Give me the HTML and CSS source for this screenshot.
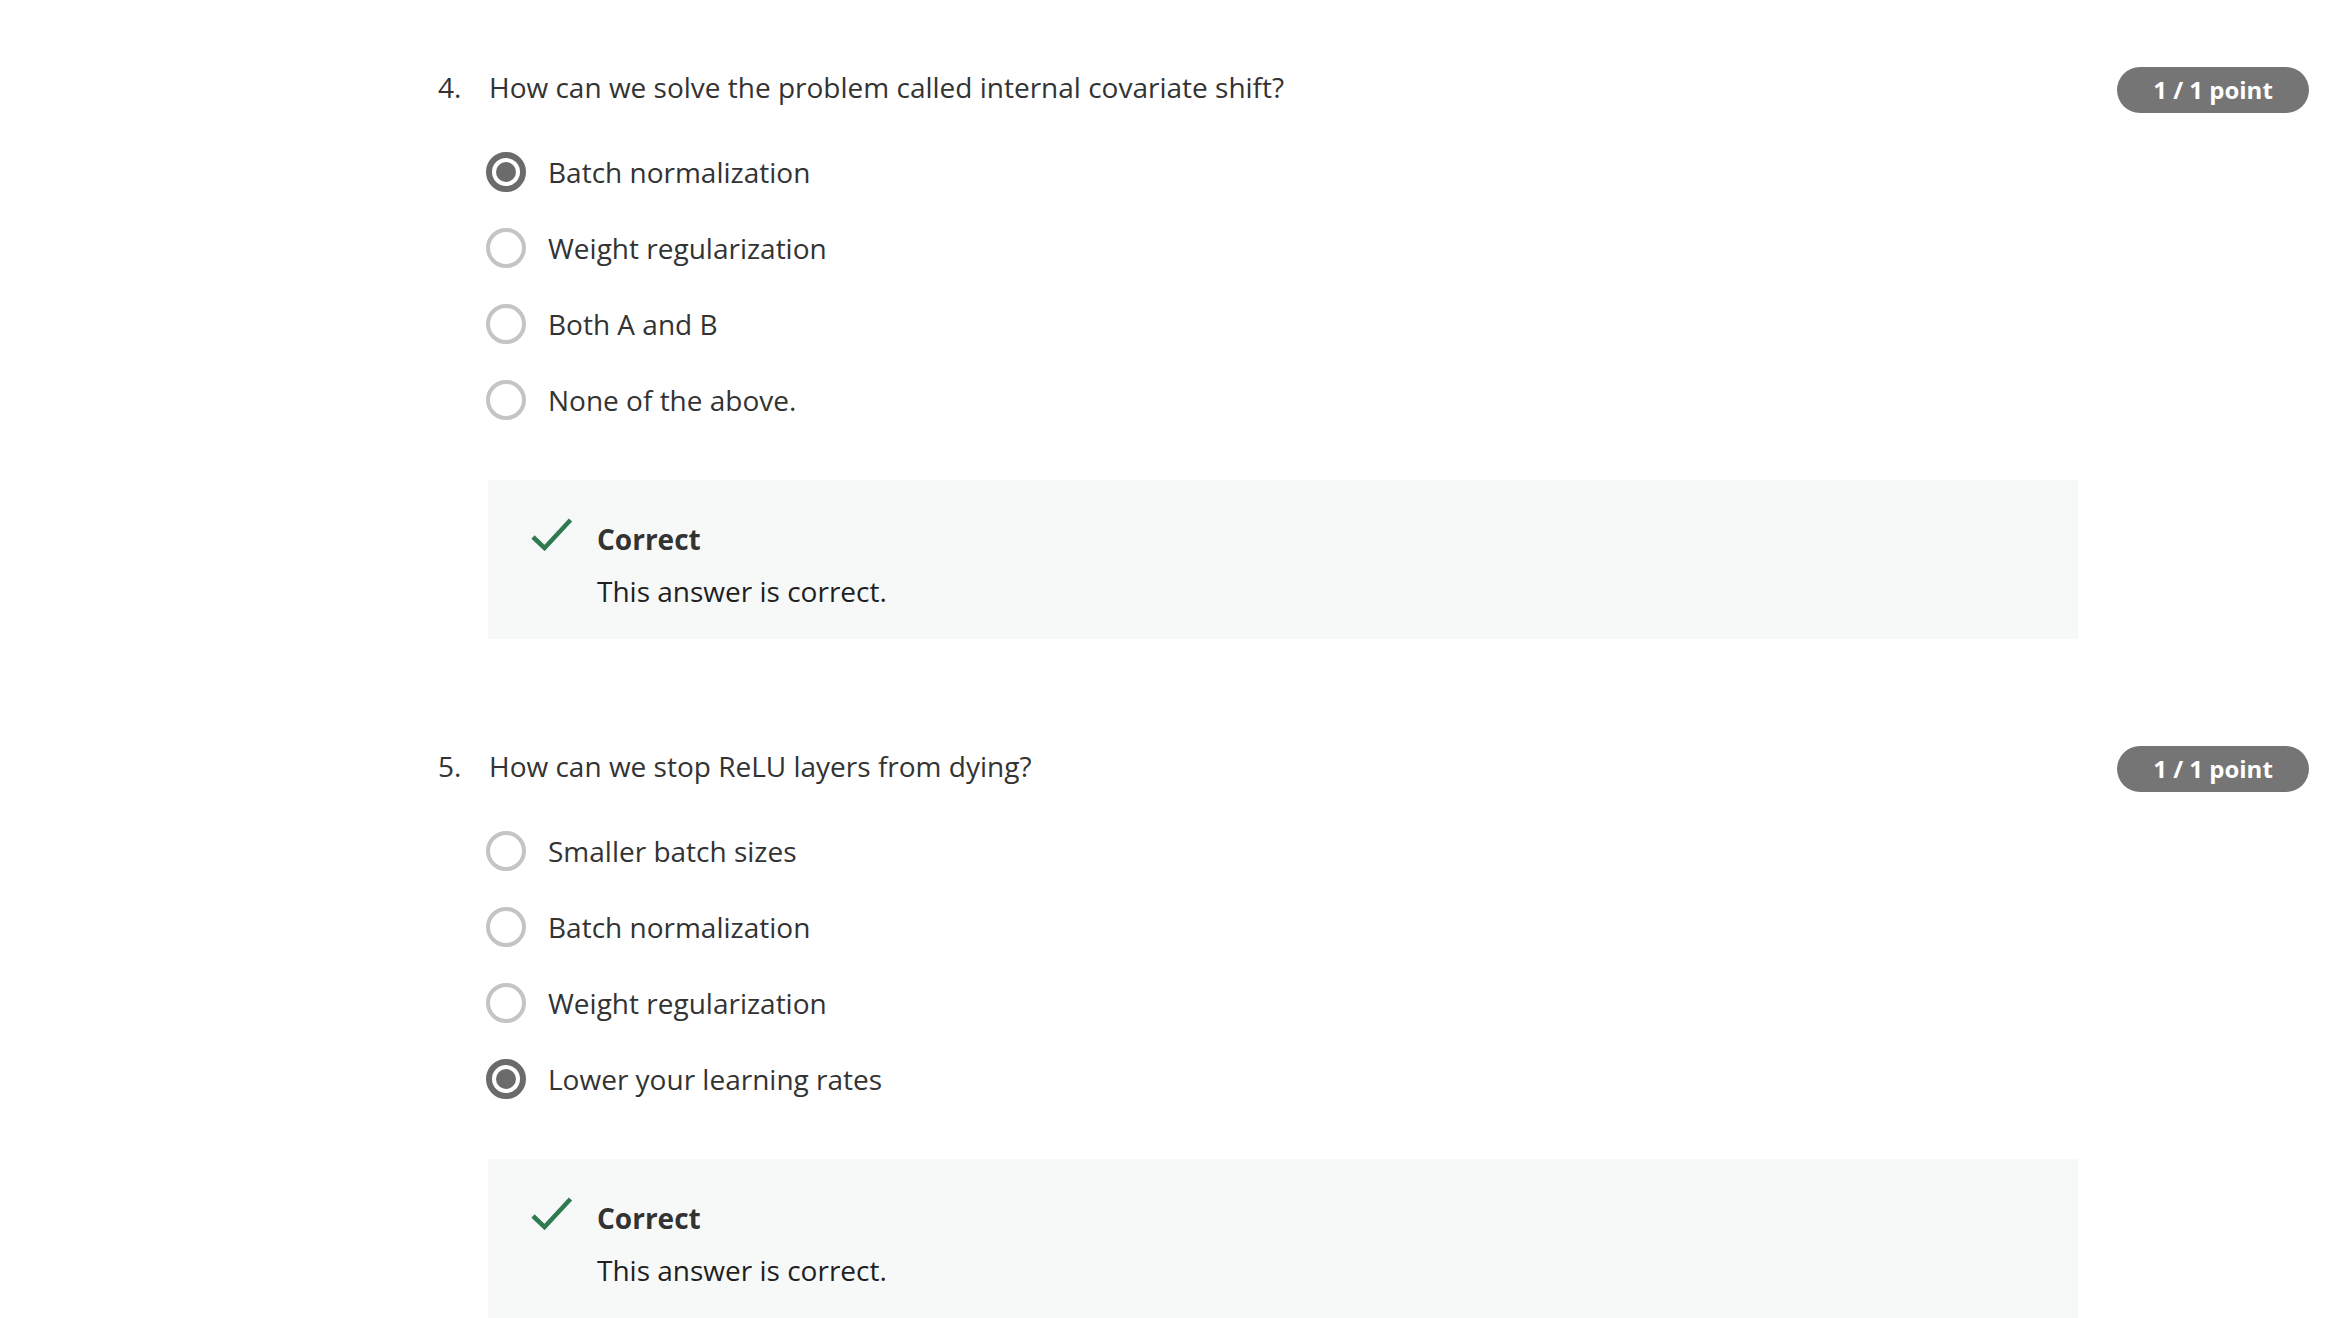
FILE: index.html
```html
<!DOCTYPE html>
<html lang="en">
<head>
<meta charset="utf-8">
<title>Quiz results</title>
<link rel="stylesheet" href="styles.css">
</head>
<body>
<main class="quiz">
  <section class="question q-first">
    <div class="qnum">4.</div>
    <div class="qbody">
      <div class="qtext">How can we solve the problem called internal covariate shift?</div>
      <ul class="options">
        <li class="option"><span class="radio checked"></span><span class="opt-label">Batch normalization</span></li>
        <li class="option"><span class="radio"></span><span class="opt-label">Weight regularization</span></li>
        <li class="option"><span class="radio"></span><span class="opt-label">Both A and B</span></li>
        <li class="option"><span class="radio"></span><span class="opt-label">None of the above.</span></li>
      </ul>
      <div class="feedback">
        <svg class="check" viewBox="0 0 42 34" width="42" height="34" aria-hidden="true"><path d="M2 20 L13.5 31 L39.5 3" fill="none" stroke="#2f7a4e" stroke-width="4.5"/></svg>
        <div class="fb-text">
          <div class="fb-title">Correct</div>
          <div class="fb-desc">This answer is correct.</div>
        </div>
      </div>
    </div>
    <div class="badge">1 / 1 point</div>
  </section>

  <section class="question q-second">
    <div class="qnum">5.</div>
    <div class="qbody">
      <div class="qtext">How can we stop ReLU layers from dying?</div>
      <ul class="options">
        <li class="option"><span class="radio"></span><span class="opt-label">Smaller batch sizes</span></li>
        <li class="option"><span class="radio"></span><span class="opt-label">Batch normalization</span></li>
        <li class="option"><span class="radio"></span><span class="opt-label">Weight regularization</span></li>
        <li class="option"><span class="radio checked"></span><span class="opt-label">Lower your learning rates</span></li>
      </ul>
      <div class="feedback">
        <svg class="check" viewBox="0 0 42 34" width="42" height="34" aria-hidden="true"><path d="M2 20 L13.5 31 L39.5 3" fill="none" stroke="#2f7a4e" stroke-width="4.5"/></svg>
        <div class="fb-text">
          <div class="fb-title">Correct</div>
          <div class="fb-desc">This answer is correct.</div>
        </div>
      </div>
    </div>
    <div class="badge">1 / 1 point</div>
  </section>
</main>
</body>
</html>
```

FILE: styles.css
```css
html, body {
  margin: 0;
  padding: 0;
  background: #ffffff;
}

body {
  font-family: "Open Sans", "Liberation Sans", sans-serif;
  color: #333333;
  height: 1318px;
  overflow: hidden;
}

.quiz {
  padding: 0 31px 0 438px;
}

.question {
  display: flex;
  align-items: flex-start;
}

.q-first {
  padding-top: 67px;
}

.q-second {
  padding-top: 107px;
}

.qnum {
  width: 50px;
  flex: 0 0 50px;
  font-size: 28px;
  line-height: 40px;
}

.qbody {
  width: 1590px;
  flex: 0 0 1590px;
}

.qtext {
  font-size: 28px;
  line-height: 40px;
  padding-left: 1px;
}

.options {
  list-style: none;
  margin: 27px 0 0 0;
  padding: 0;
}

.option {
  display: flex;
  align-items: center;
  height: 76px;
  font-size: 28px;
}

.radio {
  box-sizing: border-box;
  width: 40px;
  height: 40px;
  border-radius: 50%;
  border: 4px solid #c4c4c4;
  margin-left: -2px;
  margin-right: 22px;
  flex: 0 0 40px;
  display: flex;
  align-items: center;
  justify-content: center;
}

.radio.checked {
  border: 6px solid #6b6b6b;
}

.radio.checked::after {
  content: "";
  width: 20px;
  height: 20px;
  border-radius: 50%;
  background: #6b6b6b;
}

.opt-label {
  line-height: 40px;
}

.feedback {
  margin-top: 42px;
  background: #f7f9f9;
  display: flex;
  align-items: flex-start;
  padding: 39px 0 28px 43px;
}

.check {
  display: block;
  margin-top: -2px;
  flex: 0 0 42px;
}

.fb-text {
  margin-left: 24px;
}

.fb-title {
  font-size: 28px;
  font-weight: 700;
  line-height: 40px;
  color: #333333;
}

.fb-desc {
  margin-top: 12px;
  font-size: 28px;
  line-height: 40px;
  color: #1f1f1f;
}

.badge {
  margin-left: auto;
  margin-top: 0;
  height: 46px;
  width: 192px;
  box-sizing: border-box;
  border-radius: 23px;
  background: #757575;
  color: #ffffff;
  font-weight: 700;
  font-size: 24px;
  line-height: 46px;
  text-align: center;
}
```
